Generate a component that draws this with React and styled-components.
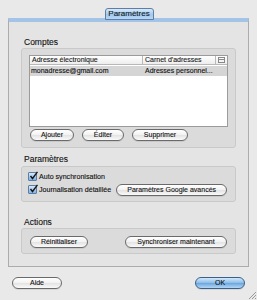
import React from "react";
import styled, { createGlobalStyle } from "styled-components";

const Global = createGlobalStyle`
  html, body {
    margin: 0;
    padding: 0;
    background: #e9e9e9;
  }
  body {
    font-family: "Liberation Sans", Arial, sans-serif;
    color: #1a1a1a;
    -webkit-text-stroke: 0.12px currentColor;
  }
`;

const Window = styled.div`
  width: 257px;
  height: 300px;
  box-sizing: border-box;
  padding-top: 8px;
  display: flex;
  flex-direction: column;
  position: relative;
  background: #e9e9e9;
`;

const TabRow = styled.div`
  display: flex;
  justify-content: center;
  height: 10px;
  position: relative;
  z-index: 2;
  padding-left: 1px;
`;

const Tab = styled.div`
  width: 49px;
  height: 12px;
  box-sizing: border-box;
  border: 1px solid #5d7fa6;
  border-radius: 3px 3px 0 0;
  background: linear-gradient(#d9eafa, #a3c8ec 55%, #b7d6f3);
  font-size: 8px;
  line-height: 10px;
  text-align: center;
  color: #0e1b2b;
  white-space: nowrap;
`;

const TabBox = styled.div`
  margin: 0 8px;
  height: 249px;
  box-sizing: border-box;
  border: 1px solid #acacac;
  border-top: 4px solid #a3c4e6;
  background: #e4e4e4;
  padding: 15px 12px 0 12px;
  display: flex;
  flex-direction: column;
`;

const SectionLabel = styled.div`
  font-size: 8.5px;
  line-height: 11px;
  height: 11px;
  padding-left: 3px;
  margin-top: ${(p) => p.$top || 0}px;
  margin-bottom: ${(p) => p.$bottom || 0}px;
  color: #111;
`;

const Group = styled.div`
  box-sizing: border-box;
  height: ${(p) => p.$h}px;
  border: 1px solid #c9c9c9;
  border-radius: 3px;
  background: #dbdbdb;
  padding: ${(p) => p.$pad || "6px 7px"};
  display: flex;
  flex-direction: column;
`;

const Table = styled.div`
  height: 75px;
  box-sizing: border-box;
  border: 1px solid #9b9b9b;
  background: #fff;
  display: flex;
  flex-direction: column;
`;

const HeaderRow = styled.div`
  display: flex;
  height: 8px;
  border-bottom: 1px solid #b8b8b8;
  background: linear-gradient(#ffffff, #ededed);
  font-size: 7px;
  line-height: 8px;
`;

const HeaderCell = styled.div`
  flex: ${(p) => (p.$w ? `0 0 ${p.$w}px` : "1")};
  box-sizing: border-box;
  padding-left: 2px;
  border-right: 1px solid #b9b9b9;
  overflow: hidden;
  white-space: nowrap;
  color: #222;
`;

const ColumnIcon = styled.div`
  flex: 0 0 11px;
  display: flex;
  align-items: center;
  justify-content: center;
`;

const DataRow = styled.div`
  display: flex;
  height: 10px;
  margin-top: 1px;
  background: #d5d5d5;
  font-size: 7px;
  line-height: 10px;
`;

const DataCell = styled.div`
  flex: ${(p) => (p.$w ? `0 0 ${p.$w}px` : "1")};
  box-sizing: border-box;
  padding-left: ${(p) => p.$pl ?? 1}px;
  white-space: nowrap;
  overflow: hidden;
  color: #111;
`;

const ButtonRow = styled.div`
  display: flex;
  align-items: center;
  gap: ${(p) => p.$gap || 7}px;
  margin-top: ${(p) => p.$top || 0}px;
  padding-left: ${(p) => p.$pl || 0}px;
`;

const PillButton = styled.button`
  width: ${(p) => p.$w}px;
  height: 12px;
  flex: 0 0 auto;
  box-sizing: border-box;
  margin-left: ${(p) => p.$ml || 0}px;
  padding: 0;
  border: 1px solid ${(p) => (p.$default ? "#3b5f86" : "#6a6a6a")};
  border-radius: 6px;
  background: ${(p) =>
    p.$default
      ? "linear-gradient(#d4e9fc, #8dbde9 48%, #6aa6dc 52%, #b4d7f6)"
      : "linear-gradient(#ffffff, #f2f2f2 48%, #e3e3e3 52%, #fafafa)"};
  font-family: "Liberation Sans", Arial, sans-serif;
  font-size: 7px;
  line-height: 10px;
  color: #111;
  -webkit-text-stroke: 0.1px #111;
  text-align: center;
  white-space: nowrap;
  box-shadow: 0 1px 0 rgba(0, 0, 0, 0.08);
`;

const CheckRow = styled.div`
  display: flex;
  align-items: center;
  height: 13px;
  font-size: 7.1px;
  color: #111;
  white-space: nowrap;
`;

const CheckBox = styled.span`
  width: 9px;
  height: 9px;
  box-sizing: border-box;
  margin-right: 2px;
  border: 1px solid #5a7ea6;
  border-radius: 1px;
  background: linear-gradient(#d6e8f9, #7fb3e5);
  display: inline-flex;
  align-items: center;
  justify-content: center;
  position: relative;
`;

const Footer = styled.div`
  display: flex;
  justify-content: space-between;
  padding: 10px 12px 0 12px;
`;

const Grip = styled.svg`
  position: absolute;
  right: 1px;
  bottom: 1px;
`;

function Check() {
  return (
    <CheckBox>
      <svg width="9" height="9" viewBox="0 0 9 9" style={{ position: "absolute", left: 0, top: -2 }}>
        <path d="M1.5 5 L3.5 7.5 L8.5 0.8" fill="none" stroke="#151515" strokeWidth="1.4" />
      </svg>
    </CheckBox>
  );
}

export default function App() {
  return (
    <Window>
      <Global />
      <TabRow>
        <Tab>Paramètres</Tab>
      </TabRow>
      <TabBox>
        <SectionLabel>Comptes</SectionLabel>
        <Group $h={100}>
          <Table>
            <HeaderRow>
              <HeaderCell>Adresse électronique</HeaderCell>
              <HeaderCell $w={73}>Carnet d'adresses</HeaderCell>
              <ColumnIcon>
                <svg width="7" height="6" viewBox="0 0 7 6">
                  <rect x="0.5" y="0.5" width="6" height="5" fill="none" stroke="#888" />
                  <line x1="0.5" y1="2.5" x2="6.5" y2="2.5" stroke="#888" />
                </svg>
              </ColumnIcon>
            </HeaderRow>
            <DataRow>
              <DataCell>monadresse@gmail.com</DataCell>
              <DataCell $w={84} $pl={2}>Adresses personnel...</DataCell>
            </DataRow>
          </Table>
          <ButtonRow $top={2} $gap={8} $pl={1}>
            <PillButton $w={44}>Ajouter</PillButton>
            <PillButton $w={42}>Éditer</PillButton>
            <PillButton $w={56}>Supprimer</PillButton>
          </ButtonRow>
        </Group>
        <SectionLabel $top={6} $bottom={1}>Paramètres</SectionLabel>
        <Group $h={36} $pad="3px 6px">
          <CheckRow>
            <Check />
            Auto synchronisation
          </CheckRow>
          <CheckRow>
            <Check />
            Journalisation détaillée
            <PillButton $w={111} $ml={5}>
              Paramètres Google avancés
            </PillButton>
          </CheckRow>
        </Group>
        <SectionLabel $top={15}>Actions</SectionLabel>
        <Group $h={26} $pad="7px 8px">
          <ButtonRow $gap={37}>
            <PillButton $w={58}>Réinitialiser</PillButton>
            <PillButton $w={102}>Synchroniser maintenant</PillButton>
          </ButtonRow>
        </Group>
      </TabBox>
      <Footer>
        <PillButton $w={50}>Aide</PillButton>
        <PillButton $w={50} $default>
          OK
        </PillButton>
      </Footer>
      <Grip width="9" height="9" viewBox="0 0 9 9">
        <line x1="2" y1="9" x2="9" y2="2" stroke="#999" />
        <line x1="5" y1="9" x2="9" y2="5" stroke="#999" />
        <line x1="8" y1="9" x2="9" y2="8" stroke="#999" />
      </Grip>
    </Window>
  );
}
